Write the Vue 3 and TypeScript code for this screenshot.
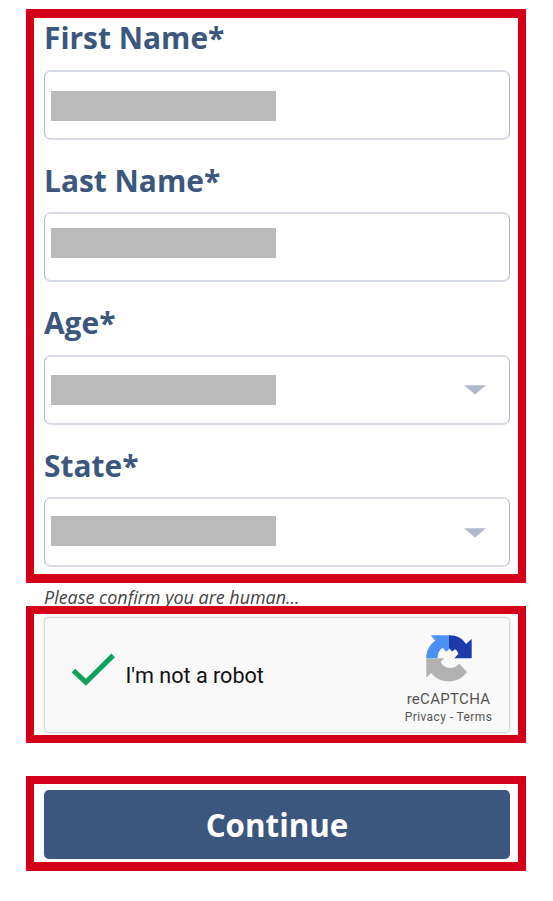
<script setup lang="ts">
interface Field {
  id: string
  label: string
  kind: 'text' | 'select'
}

const fields: Field[] = [
  { id: 'first', label: 'First Name*', kind: 'text' },
  { id: 'last', label: 'Last Name*', kind: 'text' },
  { id: 'age', label: 'Age*', kind: 'select' },
  { id: 'state', label: 'State*', kind: 'select' },
]
</script>

<template>
  <main class="page">
    <section class="frame details">
      <div v-for="field in fields" :key="field.id" class="field">
        <div class="label"><span>{{ field.label }}</span></div>
        <div class="control" :class="field.id">
          <span class="redacted"></span>
          <svg v-if="field.kind === 'select'" class="caret" viewBox="0 0 22 10" width="22" height="10">
            <path d="M0 .2H22L11 9.6Z" fill="#b0b8cb" />
          </svg>
        </div>
      </div>
    </section>

    <p class="hint"><span>Please confirm you are human...</span></p>

    <section class="frame verify">
      <div class="captcha">
        <svg class="check" viewBox="0 0 44 34" width="44" height="34">
          <path d="M2.4 17.6L14.9 29.2L42.2 2.4" fill="none" stroke="#0fa15c" stroke-width="5" />
        </svg>
        <span class="robot">I'm not a robot</span>
        <div class="brand">
          <svg class="logo" viewBox="0 0 46 47" width="46" height="47">
            <path d="M23 .3C31 .3 36.5 3.5 40 9L45.7 4V23.2H28.4L32.4 18.8C31.6 16.6 30.6 15.2 29 14.2L26 16.4L23 13Z" fill="#1c3aa9" />
            <path d="M23 .3H4.8L9.3 5.7C3.5 9.8 .3 15.5 .3 23.2H11.5C11.5 18.6 13.2 15 16.7 12.8L20 16.7L23 14.2Z" fill="#4c8ff5" />
            <path d="M.3 23.2V42.5L5.2 38C9.4 43.6 15.5 46.4 22.7 46.4C30.5 46.4 36.5 43.2 41 37L33.2 28.7C30.7 31.6 28 32.9 24 32.9C19.8 32.7 16.4 30.6 14.6 27L18.4 23.2Z" fill="#b2b2b2" />
          </svg>
          <span class="name">reCAPTCHA</span>
          <span class="links">Privacy - Terms</span>
        </div>
      </div>
    </section>

    <section class="frame submit">
      <button type="button" class="continue">Continue</button>
    </section>
  </main>
</template>

<style>
body {
  margin: 0;
  background: #fff;
}
</style>

<style scoped>
.page {
  box-sizing: border-box;
  width: 553px;
  height: 901px;
  padding: 9px 27px 0 26px;
  display: flex;
  flex-direction: column;
  font-family: 'Open Sans', sans-serif;
}

.frame {
  box-sizing: border-box;
  width: 500.4px;
  border: 8px solid #d40019;
  flex: none;
}

.details {
  height: 574px;
  border-width: 9px 8px;
  padding: 0 8.4px 0 10px;
}

.field {
  height: 142.4px;
}

.label {
  box-sizing: border-box;
  height: 52px;
  color: #3b577d;
  font-size: 29.9px;
  font-weight: 700;
  line-height: 40px;
  white-space: nowrap;
}

.field:nth-child(even) .label {
  padding-top: 1px;
}

.control {
  box-sizing: border-box;
  height: 70px;
  display: flex;
  align-items: flex-start;
  justify-content: space-between;
  border: 1px solid #b0b8cb;
  border-top: 2px solid #d8dce6;
  border-bottom: 2px solid #d8dce6;
  border-radius: 7px;
  padding: 19px 23px 0 6px;
}

.last {
  padding-top: 14px;
}

.age {
  padding-top: 18px;
}

.state {
  padding-top: 17px;
}

.redacted {
  width: 225px;
  height: 30px;
  background: #bababa;
}

.caret {
  margin-top: 10px;
}

.state .caret {
  margin-top: 12px;
}

.hint {
  height: 23px;
  margin: 0;
  padding-left: 18px;
  color: #444;
  font-size: 17.95px;
  font-style: italic;
  line-height: 28px;
  white-space: nowrap;
}

.verify {
  position: relative;
  height: 137px;
  padding: 3px 8.4px 2px 10px;
  background: #fff;
}

.captcha {
  box-sizing: border-box;
  height: 116px;
  display: flex;
  align-items: flex-start;
  border: 1px solid #d6d6d6;
  border-radius: 4px;
  background: #f9f9f9;
  box-shadow: 0 0 4px 1px rgba(0, 0, 0, 0.08);
  font-family: Roboto, sans-serif;
}

.check {
  margin: 35px 0 0 26px;
}

.robot {
  margin: 42px 0 0 10.5px;
  color: #111;
  font-size: 21.6px;
  line-height: 32px;
  white-space: nowrap;
}

.brand {
  width: 90px;
  margin: 17px 15.5px 0 auto;
  display: flex;
  flex-direction: column;
  align-items: center;
  color: #555;
  white-space: nowrap;
}

.name {
  margin-top: 7px;
  font-size: 15px;
  line-height: 20px;
  letter-spacing: 0.3px;
}

.links {
  font-size: 12px;
  line-height: 16px;
  letter-spacing: 0.4px;
}

.submit {
  height: 95px;
  margin-top: 33px;
  border-bottom-width: 9px;
  padding: 5.5px 8.4px 0 10px;
}

.continue {
  display: block;
  width: 100%;
  height: 69px;
  border: 0;
  border-radius: 5px;
  padding: 2px 0 0;
  background: #3b577d;
  color: #fff;
  font: 700 31.3px/67px 'Open Sans', sans-serif;
}
</style>
